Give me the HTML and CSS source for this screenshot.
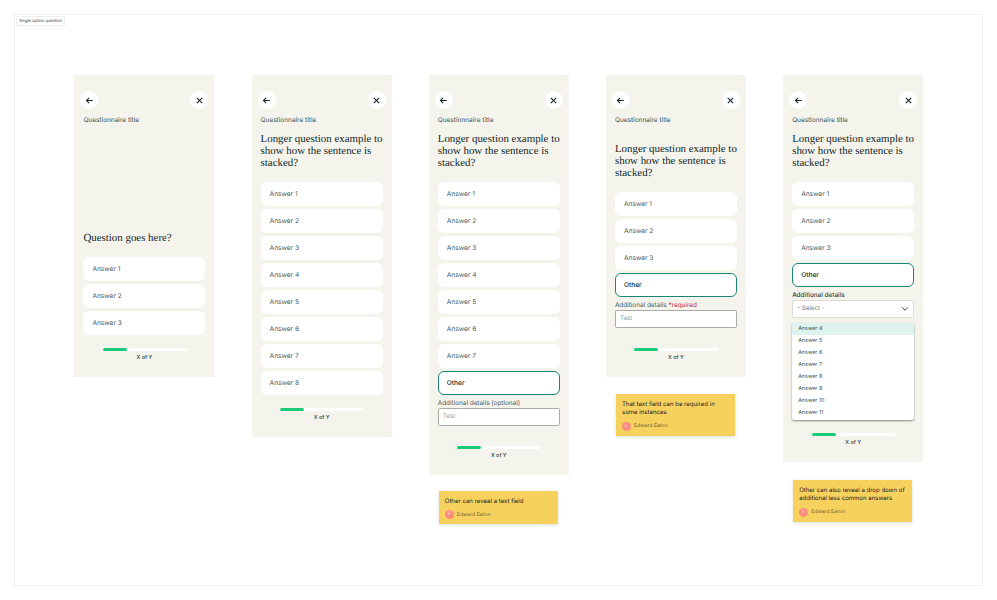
FILE: index.html
```html
<!DOCTYPE html>
<html lang="en">
<head>
    <meta charset="UTF-8">
    <meta name="viewport" content="width=device-width, initial-scale=1.0">
    <title>Single option question</title>
    <link rel="stylesheet" href="styles.css">
</head>
<body>
    <div class="frame">
        <div class="frame-label">Single option question</div>
        <div class="board">

            <div class="column">
                <div class="phone">
                    <div class="nav">
                        <span class="nav-btn"><svg viewBox="0 0 10 10"><path d="M8.6 5H1.6M4.6 2 1.6 5l3 3"/></svg></span>
                        <span class="nav-btn"><svg viewBox="0 0 10 10"><path d="M2 2l6 6M8 2 2 8"/></svg></span>
                    </div>
                    <p class="quiz-title">Questionnaire title</p>
                    <h2 class="question question-low">Question goes here?</h2>
                    <div class="answers">
                        <div class="answer">Answer 1</div>
                        <div class="answer">Answer 2</div>
                        <div class="answer">Answer 3</div>
                    </div>
                    <div class="progress"><div class="progress-bar"><span></span></div><p>X of Y</p></div>
                </div>
            </div>

            <div class="column">
                <div class="phone">
                    <div class="nav">
                        <span class="nav-btn"><svg viewBox="0 0 10 10"><path d="M8.6 5H1.6M4.6 2 1.6 5l3 3"/></svg></span>
                        <span class="nav-btn"><svg viewBox="0 0 10 10"><path d="M2 2l6 6M8 2 2 8"/></svg></span>
                    </div>
                    <p class="quiz-title">Questionnaire title</p>
                    <h2 class="question">Longer question example to show how the sentence is stacked?</h2>
                    <div class="answers">
                        <div class="answer">Answer 1</div>
                        <div class="answer">Answer 2</div>
                        <div class="answer">Answer 3</div>
                        <div class="answer">Answer 4</div>
                        <div class="answer">Answer 5</div>
                        <div class="answer">Answer 6</div>
                        <div class="answer">Answer 7</div>
                        <div class="answer">Answer 8</div>
                    </div>
                    <div class="progress"><div class="progress-bar"><span></span></div><p>X of Y</p></div>
                </div>
            </div>

            <div class="column">
                <div class="phone">
                    <div class="nav">
                        <span class="nav-btn"><svg viewBox="0 0 10 10"><path d="M8.6 5H1.6M4.6 2 1.6 5l3 3"/></svg></span>
                        <span class="nav-btn"><svg viewBox="0 0 10 10"><path d="M2 2l6 6M8 2 2 8"/></svg></span>
                    </div>
                    <p class="quiz-title">Questionnaire title</p>
                    <h2 class="question">Longer question example to show how the sentence is stacked?</h2>
                    <div class="answers">
                        <div class="answer">Answer 1</div>
                        <div class="answer">Answer 2</div>
                        <div class="answer">Answer 3</div>
                        <div class="answer">Answer 4</div>
                        <div class="answer">Answer 5</div>
                        <div class="answer">Answer 6</div>
                        <div class="answer">Answer 7</div>
                        <div class="answer selected">Other</div>
                    </div>
                    <p class="field-label">Additional details (optional)</p>
                    <div class="text-field">Test</div>
                    <div class="progress"><div class="progress-bar"><span></span></div><p>X of Y</p></div>
                </div>
                <div class="note note-one">
                    <p>Other can reveal a text field</p>
                    <div class="note-author"><span class="avatar">E</span>Edward Eaton</div>
                </div>
            </div>

            <div class="column">
                <div class="phone">
                    <div class="nav">
                        <span class="nav-btn"><svg viewBox="0 0 10 10"><path d="M8.6 5H1.6M4.6 2 1.6 5l3 3"/></svg></span>
                        <span class="nav-btn"><svg viewBox="0 0 10 10"><path d="M2 2l6 6M8 2 2 8"/></svg></span>
                    </div>
                    <p class="quiz-title">Questionnaire title</p>
                    <h2 class="question question-mid">Longer question example to show how the sentence is stacked?</h2>
                    <div class="answers">
                        <div class="answer">Answer 1</div>
                        <div class="answer">Answer 2</div>
                        <div class="answer">Answer 3</div>
                        <div class="answer selected">Other</div>
                    </div>
                    <p class="field-label">Additional details <span class="required">*required</span></p>
                    <div class="text-field">Test</div>
                    <div class="progress"><div class="progress-bar"><span></span></div><p>X of Y</p></div>
                </div>
                <div class="note note-two">
                    <p>That text field can be required in some instances</p>
                    <div class="note-author"><span class="avatar">E</span>Edward Eaton</div>
                </div>
            </div>

            <div class="column">
                <div class="phone">
                    <div class="nav">
                        <span class="nav-btn"><svg viewBox="0 0 10 10"><path d="M8.6 5H1.6M4.6 2 1.6 5l3 3"/></svg></span>
                        <span class="nav-btn"><svg viewBox="0 0 10 10"><path d="M2 2l6 6M8 2 2 8"/></svg></span>
                    </div>
                    <p class="quiz-title">Questionnaire title</p>
                    <h2 class="question">Longer question example to show how the sentence is stacked?</h2>
                    <div class="answers">
                        <div class="answer">Answer 1</div>
                        <div class="answer">Answer 2</div>
                        <div class="answer">Answer 3</div>
                        <div class="answer selected">Other</div>
                    </div>
                    <p class="field-label field-label-dark">Additional details</p>
                    <div class="select-field">- Select -<svg viewBox="0 0 10 10"><path d="M1.5 3 5 6.6 8.5 3"/></svg></div>
                    <ul class="dropdown">
                        <li class="active">Answer 4</li>
                        <li>Answer 5</li>
                        <li>Answer 6</li>
                        <li>Answer 7</li>
                        <li>Answer 8</li>
                        <li>Answer 9</li>
                        <li>Answer 10</li>
                        <li>Answer 11</li>
                    </ul>
                    <div class="progress"><div class="progress-bar"><span></span></div><p>X of Y</p></div>
                </div>
                <div class="note note-three">
                    <p>Other can also reveal a drop down of additional less common answers</p>
                    <div class="note-author"><span class="avatar">E</span>Edward Eaton</div>
                </div>
            </div>

        </div>
    </div>
</body>
</html>
```

FILE: styles.css
```css
* {
    box-sizing: border-box;
}
body {
    margin: 0;
    height: 600px;
    overflow: hidden;
    background: white;
    font-family: Inter, "Liberation Sans", sans-serif;
    color: #1d3b3f;
    text-rendering: geometricPrecision;
}
p, h2, ul {
    margin: 0;
    padding: 0;
}
.frame {
    position: relative;
    margin: 14px 0 0 14px;
    width: 969px;
    height: 572px;
    border: 1px solid #f1f1f1;
    padding: 60px 0 0 59.4px;
}
.frame-label {
    position: absolute;
    left: 1px;
    top: 1px;
    height: 10px;
    padding: 0 2px;
    border: 1px solid #eeeeee;
    background: white;
    font-size: 4.1px;
    line-height: 8px;
    color: #333;
    white-space: nowrap;
}
.board {
    display: flex;
    gap: 37.2px;
    align-items: flex-start;
}
.column {
    width: 140px;
}
.phone {
    background: #f4f4ec;
    padding: 16px 9px 15px;
}
.nav {
    display: flex;
    justify-content: space-between;
    margin: 0 0 0 -3px;
    width: 128px;
}
.nav-btn {
    width: 18px;
    height: 18px;
    border-radius: 50%;
    background: white;
    display: flex;
    align-items: center;
    justify-content: center;
}
.nav-btn svg {
    width: 9px;
    height: 9px;
    fill: none;
    stroke: #12282b;
    stroke-width: 1.2;
}
.quiz-title {
    margin-top: 7px;
    font-size: 6.5px;
    line-height: 8px;
    color: #3a5558;
}
.question {
    margin: 9px 0 13px;
    font-family: "Liberation Serif", serif;
    font-weight: normal;
    font-size: 10.9px;
    line-height: 12px;
    color: #12282b;
}
.question-mid {
    margin-top: 19px;
}
.question-low {
    margin-top: 108px;
}
.answers {
    display: flex;
    flex-direction: column;
    gap: 3px;
}
.answer {
    height: 24px;
    padding: 0 9px;
    border-radius: 6px;
    background: white;
    font-size: 6.6px;
    line-height: 24px;
    color: #4a6063;
}
.answer.selected {
    border: 1px solid #1a8572;
    padding: 0 8px;
    line-height: 22px;
    font-weight: 500;
    color: #12282b;
}
.field-label {
    margin-top: 4px;
    font-size: 6.4px;
    line-height: 8px;
    color: #4a6063;
}
.field-label-dark {
    font-weight: 500;
    color: #1d3b3f;
}
.required {
    color: #c0283c;
}
.text-field {
    margin-top: 1px;
    height: 18px;
    padding: 0 4px;
    border: 1px solid #a9a9a5;
    border-radius: 1.5px;
    background: white;
    font-size: 6.2px;
    line-height: 16px;
    color: #8a9799;
}
.select-field {
    margin-top: 1px;
    height: 18px;
    padding: 0 4px;
    border: 1px solid #dcdcd6;
    border-radius: 2px;
    background: white;
    font-size: 6.2px;
    line-height: 16px;
    color: #6a7b7d;
    display: flex;
    align-items: center;
    justify-content: space-between;
}
.select-field svg {
    width: 8px;
    height: 8px;
    fill: none;
    stroke: #12282b;
    stroke-width: 1.1;
}
.dropdown {
    list-style: none;
    margin-top: 5px;
    padding: 0 0 1px;
    border-radius: 2px;
    background: white;
    box-shadow: 0 1px 2px rgba(0, 0, 0, 0.45);
}
.dropdown li {
    height: 12px;
    padding-left: 6px;
    font-size: 5.4px;
    line-height: 12px;
    color: #3a5558;
}
.dropdown li.active {
    background: #dff3ee;
}
.progress {
    margin-top: 13px;
    text-align: center;
}
.text-field + .progress {
    margin-top: 20px;
}
.progress-bar {
    width: 84px;
    height: 3px;
    margin-left: 19.5px;
    border-radius: 2px;
    background: white;
}
.progress-bar span {
    display: block;
    width: 24px;
    height: 3px;
    border-radius: 2px;
    background: #1ccb7a;
}
.progress p {
    margin-top: 4px;
    font-size: 5.4px;
    line-height: 7px;
    font-weight: 500;
    color: #1d3b3f;
}
.note {
    width: 119px;
    margin-left: 10px;
    padding: 7px 4px 5px 6px;
    background: #f7d15e;
    box-shadow: 0 1px 3px rgba(0, 0, 0, 0.15);
    font-size: 6.05px;
    line-height: 8.4px;
    color: #222;
}
.note-one {
    margin-top: 16px;
}
.note-two {
    margin-top: 17px;
}
.note-three {
    margin-top: 18px;
}
.note-author {
    display: flex;
    align-items: center;
    gap: 3px;
    margin-top: 4px;
    font-size: 5.2px;
    color: #6b5f35;
}
.avatar {
    width: 9px;
    height: 9px;
    border-radius: 50%;
    background: #f98b7f;
    color: #fbe3cf;
    font-size: 4.5px;
    line-height: 9px;
    text-align: center;
}
```
